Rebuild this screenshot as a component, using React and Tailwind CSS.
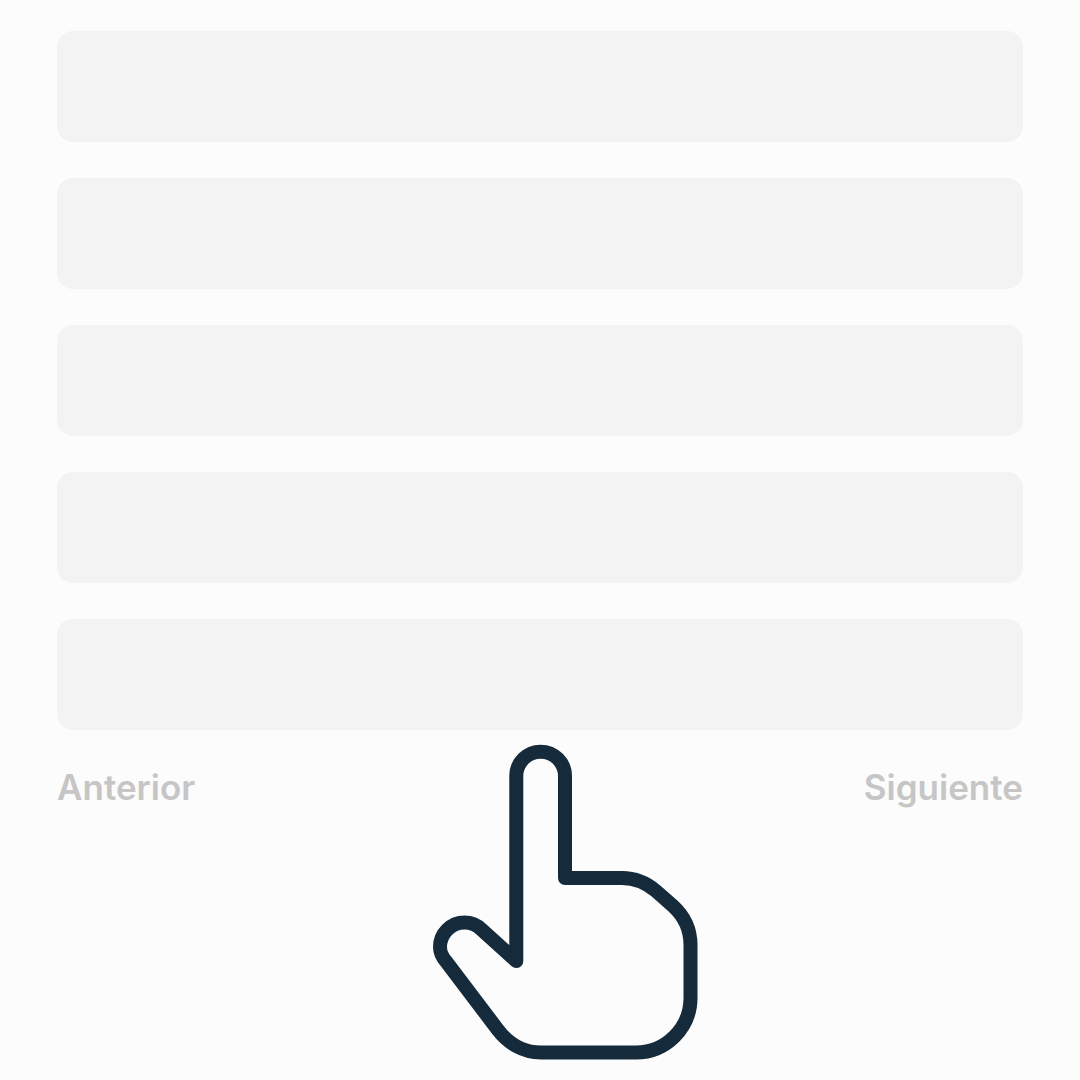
const rows = [1, 2, 3, 4, 5];

function PointingHand() {
  return (
    <svg
      aria-hidden="true"
      viewBox="0 0 266 317"
      className="h-[317px] w-[266px] shrink-0"
      fill="#fcfcfc"
      stroke="#152b3b"
      strokeWidth="14"
      strokeLinecap="round"
      strokeLinejoin="round"
    >
      <path d="M84.3 217V32A24.3 24.3 0 0 1 133 32V134H190C203 134 214 138.5 224 147L241 162C252 172 258.5 186 258.5 201V254C258.5 284 234 308.5 204 308.5H109C91 308.5 76 299 66 286L14.5 218C10 213 8 208 8 203A24.5 24.5 0 0 1 32.5 178.5C39 178.5 45 181 49.5 185.5Z" />
    </svg>
  );
}

export default function App() {
  return (
    <main className="min-h-screen bg-[#fcfcfc] px-[57px] pt-[31px] pb-5 font-['Inter',sans-serif]">
      <ul className="flex flex-col gap-9">
        {rows.map((row) => (
          <li key={row} className="h-[111px] rounded-2xl bg-[#f3f3f3]" />
        ))}
      </ul>
      <nav className="relative mt-9 flex items-start justify-between text-[35px] leading-[42px] font-semibold text-[#c6c6c6]">
        <button type="button">Anterior</button>
        <button type="button">Siguiente</button>
        <div className="pointer-events-none absolute left-1/2 -top-[22px] -ml-[108px]">
          <PointingHand />
        </div>
      </nav>
    </main>
  );
}
